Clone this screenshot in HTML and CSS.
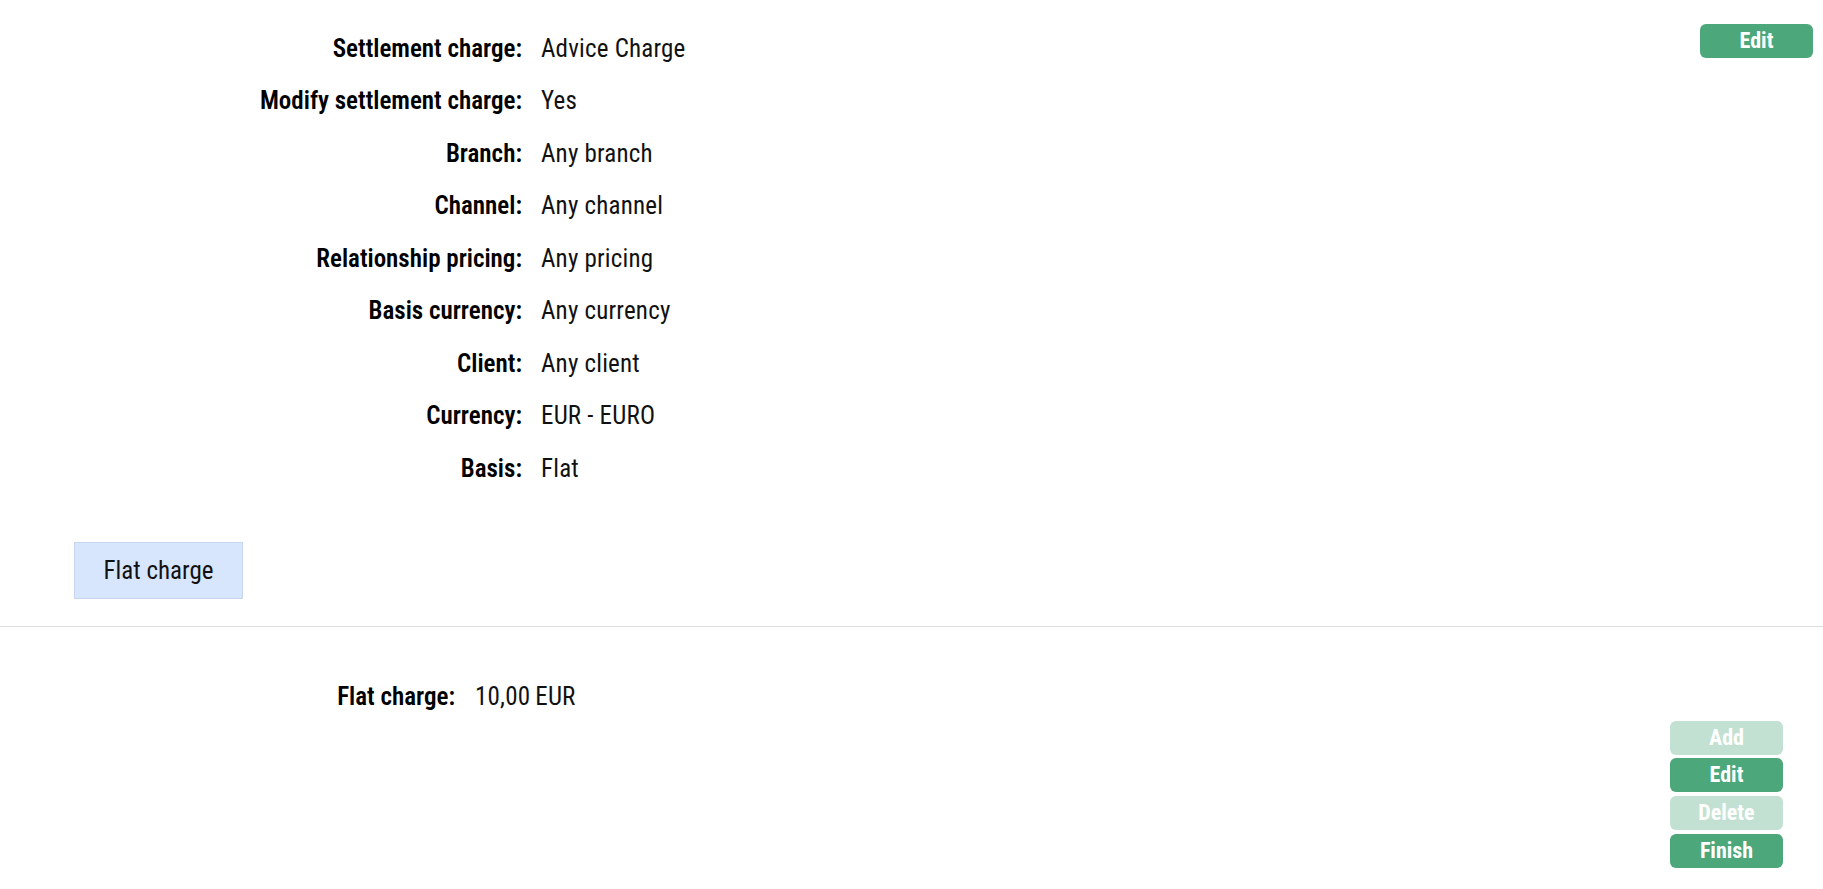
FILE: index.html
```html
<!DOCTYPE html>
<html lang="en">
<head>
<meta charset="utf-8">
<title>Settlement charge</title>
<link rel="stylesheet" href="styles.css">
</head>
<body>
<section class="top">
  <dl class="details">
    <dt>Settlement charge:</dt><dd>Advice Charge</dd>
    <dt>Modify settlement charge:</dt><dd>Yes</dd>
    <dt>Branch:</dt><dd>Any branch</dd>
    <dt>Channel:</dt><dd>Any channel</dd>
    <dt>Relationship pricing:</dt><dd>Any pricing</dd>
    <dt>Basis currency:</dt><dd>Any currency</dd>
    <dt>Client:</dt><dd>Any client</dd>
    <dt>Currency:</dt><dd>EUR - EURO</dd>
    <dt>Basis:</dt><dd>Flat</dd>
  </dl>
  <button class="btn btn--top">Edit</button>
</section>
<nav class="tabs">
  <div class="tab">Flat charge</div>
</nav>
<div class="divider"></div>
<section class="bottom">
  <dl class="details details--charge">
    <dt>Flat charge:</dt><dd>10,00&#8201;EUR</dd>
  </dl>
  <div class="actions">
    <button class="btn btn--disabled">Add</button>
    <button class="btn">Edit</button>
    <button class="btn btn--disabled">Delete</button>
    <button class="btn">Finish</button>
  </div>
</section>
</body>
</html>
```
FILE: styles.css
```css
body {
  margin: 0;
  background: #fff;
  color: #111;
  font-family: "Roboto Condensed", Roboto, "Liberation Sans", sans-serif;
  font-size: 25px;
}

.top {
  display: flex;
  justify-content: space-between;
  align-items: flex-start;
  padding: 22px 10px 0 0;
}

.details {
  display: grid;
  grid-template-columns: 522px auto;
  column-gap: 19px;
  grid-auto-rows: 52.5px;
  align-items: center;
  margin: 0;
}

.details dt {
  text-align: right;
  font-weight: 600;
  color: #000;
  white-space: nowrap;
}

.details dd {
  margin: 0;
  font-weight: 400;
  color: #111;
  white-space: nowrap;
  letter-spacing: 0.2px;
}

.details--charge {
  grid-template-columns: 455px auto;
  column-gap: 20px;
}

.btn {
  display: block;
  width: 113px;
  height: 34px;
  padding: 0;
  border: 0;
  border-radius: 6px;
  background: #4ca77a;
  color: #fff;
  font-family: "Roboto Condensed", Roboto, "Liberation Sans", sans-serif;
  font-size: 22px;
  font-weight: 700;
  line-height: 34px;
  text-align: center;
  cursor: pointer;
}

.btn--top {
  margin-top: 2px;
}

.btn--disabled {
  background: #c3e1d2;
  cursor: default;
}

.tabs {
  display: flex;
  padding-left: 74px;
  margin-top: 47px;
}

.tab {
  box-sizing: border-box;
  width: 169px;
  height: 57px;
  display: flex;
  align-items: center;
  justify-content: center;
  background: #d7e5fd;
  border: 1px solid #c6d6ef;
  color: #111;
}

.divider {
  height: 1px;
  background: #dcdcdc;
  margin-top: 27px;
}

.bottom {
  display: flex;
  justify-content: space-between;
  align-items: flex-start;
  padding: 44px 40px 0 0;
}

.actions {
  display: flex;
  flex-direction: column;
  gap: 3.7px;
  margin-top: 50px;
}
```
